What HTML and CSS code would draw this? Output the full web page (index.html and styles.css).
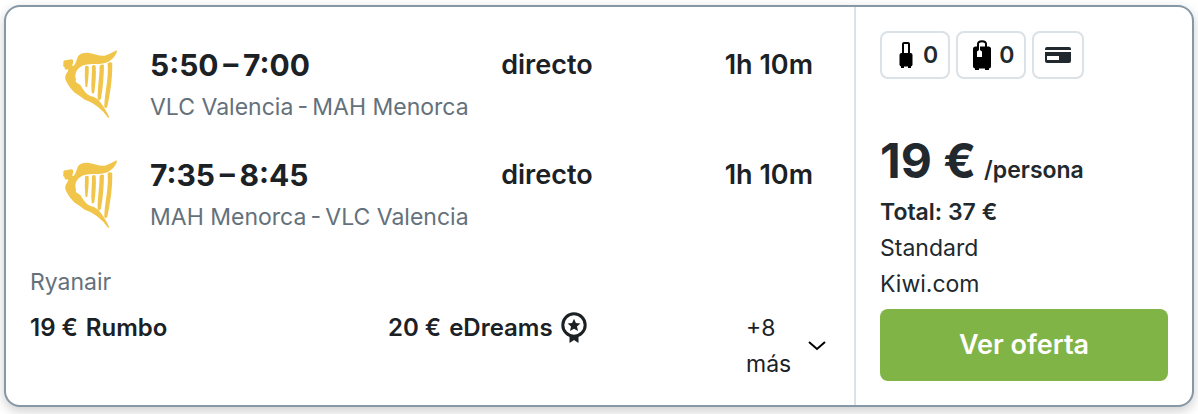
FILE: index.html
```html
<!DOCTYPE html>
<html lang="es">
<head>
<meta charset="utf-8">
<meta name="viewport" content="width=device-width, initial-scale=1">
<title>Valencia - Menorca</title>
<link rel="stylesheet" href="styles.css">
</head>
<body>
<svg class="sprite" aria-hidden="true">
  <symbol id="logo-harp" viewBox="60 50 180 220">
    <path d="M94 87 L72 91 Q68 94 70 99 L69 107 L73 110 L74 116 Q78 119 84 117 Q86 121 81 127 Q72 139 77 150 C84 166 94 178 103 187 Q121 198 134 209 C151 214 163 222 174 231 Q191 244 205 264 L208 262 C202 248 193 233 185 222 Q176 207 161 200 C146 198 135 187 127 174 Q121 162 109 157 Q105 153 108 148 C103 136 107 123 116 114 C128 101 151 101 175 101 C200 101 218 88 225 76 Q233 66 230 60 C217 67 209 72 194 76 C176 77 164 71 147 68 C130 66 118 72 114 78 C108 91 108 99 101 107 Q94 109 99 98 Q101 88 94 87Z"/>
    <path d="M135 109Q140 104 146 109Q147 134 142 169Q140 174 136 168Q133 137 135 109Z"/>
    <path d="M156 107Q163 102 167 107C169 134 167 157 163 186Q159 193 155 187C152 158 157 132 156 107Z"/>
    <path d="M179 107Q185 100 192 104C192 137 189 171 183 206Q178 214 173 207C173 169 179 138 179 107Z"/>
    <path d="M203 99Q210 93 217 98C218 145 211 189 202 230Q198 237 193 231C194 185 207 146 203 99Z"/>
  </symbol>
</svg>

<article class="card">
  <section class="trip">
    <div class="legs">
      <div class="leg">
        <svg class="airline" viewBox="60 50 180 220" role="img" aria-label="Ryanair"><use href="#logo-harp" x="60" y="50" width="180" height="220"/></svg>
        <div class="route">
          <div class="times">5:50&#8201;–&#8201;7:00</div>
          <div class="airports">VLC Valencia&#8201;-&#8201;MAH Menorca</div>
        </div>
        <div class="stops">directo</div>
        <div class="duration">1h 10m</div>
      </div>
      <div class="leg">
        <svg class="airline" viewBox="60 50 180 220" role="img" aria-label="Ryanair"><use href="#logo-harp" x="60" y="50" width="180" height="220"/></svg>
        <div class="route">
          <div class="times">7:35&#8201;–&#8201;8:45</div>
          <div class="airports">MAH Menorca&#8201;-&#8201;VLC Valencia</div>
        </div>
        <div class="stops">directo</div>
        <div class="duration">1h 10m</div>
      </div>
    </div>
    <div class="carrier">Ryanair</div>
    <div class="providers">
      <a class="provider" href="#rumbo"><span class="amount">19 €</span><span>Rumbo</span></a>
      <a class="provider" href="#edreams"><span class="amount">20 €</span><span>eDreams</span>
        <svg class="award" viewBox="0 0 26 32" aria-hidden="true">
          <path d="M8.500 22v9l4.500-3 4.500 3v-9z"/>
          <circle cx="13" cy="13" r="11.200" class="award-ring"/>
          <path d="m13 6.800 1.900 4.200 4.500.500-3.400 3 1 4.500-4-2.300-4 2.300 1-4.500-3.400-3 4.500-.500z"/>
        </svg>
      </a>
      <button class="more" type="button"><span>+8 más</span>
        <svg class="chevron" viewBox="0 0 18 10" aria-hidden="true"><path d="m1 1 8 7 8-7"/></svg>
      </button>
    </div>
  </section>

  <section class="offer">
    <div class="badges">
      <span class="badge">
        <svg class="bag" viewBox="0 0 20 30" aria-hidden="true">
          <path d="M7 13V4q0-1 1-1h4q1 0 1 1v9" class="bag-handle"/>
          <rect x="3.500" y="13" width="13" height="13.500" rx="2"/>
          <path d="M5 26h3v2H5zM12 26h3v2h-3z"/>
        </svg>0
      </span>
      <span class="badge">
        <svg class="bag" viewBox="0 0 20 30" aria-hidden="true">
          <path d="M6 7V4q0-2.800 4-2.800t4 2.800v3" class="bag-handle"/>
          <rect x="1" y="6.500" width="18" height="22" rx="2.500"/>
          <path d="M3 28h4v2H3zM13 28h4v2h-4z"/>
          <path d="M7.500 6v5" class="bag-tag"/>
          <path d="M5 11.500l2-1.500h1l2 1.500V17H5z" fill="#fff"/>
        </svg>0
      </span>
      <span class="badge">
        <svg class="pay" viewBox="0 0 26 16" aria-hidden="true">
          <path d="M0 3V2q0-2 2-2h22q2 0 2 2v1zM0 5h26v9q0 2-2 2H2q-2 0-2-2zM2 9v4h12V9z" fill-rule="evenodd"/>
        </svg>
      </span>
    </div>
    <div class="summary">
      <div class="price"><span class="value">19 €</span><span class="unit">/persona</span></div>
      <div class="total">Total: 37 €</div>
      <div class="line">Standard</div>
      <div class="line">Kiwi.com</div>
      <button class="cta" type="button">Ver oferta</button>
    </div>
  </section>
</article>
</body>
</html>
```
FILE: styles.css
```css
* { box-sizing: border-box; }

body {
  margin: 0;
  padding: 5px 4px 7px;
  background: #fff;
  color: #1b2125;
  font: 400 23px/36px Inter, "Liberation Sans", sans-serif;
}

.sprite { display: none; }

button, a { font: inherit; color: inherit; text-decoration: none; }

.card {
  display: grid;
  grid-template-columns: minmax(0, 848fr) minmax(0, 338fr);
  border: 2px solid #8697a5;
  border-radius: 16px;
  background: #fff;
  box-shadow: 0 4px 12px rgba(0, 0, 0, .2);
}

.trip {
  display: flex;
  flex-direction: column;
  padding: 34px 28px 23px 24px;
}

.legs { display: grid; gap: 26px; }

.leg {
  display: grid;
  grid-template-columns: 120px minmax(0, 352fr) minmax(0, 224fr) auto;
  padding-right: 13px;
}

.airline {
  width: 60px;
  height: 73px;
  margin: 6px 0 0 30px;
  fill: #f1c549;
}

.times { font-size: 30px; line-height: 48px; font-weight: 700; }
.airports, .carrier { color: #64717b; }
.airports { white-space: nowrap; }
.stops, .duration { font-size: 27px; line-height: 48px; font-weight: 600; }
.carrier { margin-top: 29px; }

.providers {
  display: grid;
  grid-template-columns: minmax(0, 358fr) minmax(0, 358fr) minmax(0, 80fr);
  align-items: start;
  margin-top: 10px;
}

.provider {
  display: flex;
  align-items: center;
  gap: 8px;
  font-size: 24px;
  font-weight: 600;
}

.award { width: 26px; height: 32px; fill: #1b2125; }
.award-ring { fill: #fff; stroke: #1b2125; stroke-width: 3; }

.more {
  display: flex;
  align-items: center;
  justify-content: space-between;
  gap: 8px;
  padding: 0;
  border: 0;
  background: none;
  text-align: left;
}

.chevron { flex: none; width: 18px; height: 10px; fill: none; stroke: #000; stroke-width: 2; }

.offer {
  display: flex;
  flex-direction: column;
  justify-content: space-between;
  padding: 24px;
  border-left: 2px solid #dae1e7;
  color: #21292e;
}

.badges { display: flex; gap: 6px; }

.badge {
  display: flex;
  align-items: center;
  gap: 7px;
  height: 48px;
  padding: 0 10px 0 14px;
  border: 2px solid #dae1e7;
  border-radius: 8px;
  font-weight: 600;
}

.badge:last-child { padding: 0 11px; }
.bag { width: 20px; height: 30px; fill: #000; }
.bag-handle { fill: none; stroke: #000; stroke-width: 2; }
.bag-tag { fill: none; stroke: #fff; stroke-width: 1; }
.pay { width: 26px; height: 16px; fill: #21292e; }

.price { display: flex; align-items: baseline; gap: 8px; line-height: 48px; font-weight: 600; }
.value { font-size: 48px; font-weight: 700; }
.total { font-weight: 600; }

.cta {
  display: block;
  width: 100%;
  height: 72px;
  margin-top: 7px;
  border: 0;
  border-radius: 8px;
  background: #81b446;
  color: #fff;
  font-size: 27px;
  font-weight: 600;
}
```
